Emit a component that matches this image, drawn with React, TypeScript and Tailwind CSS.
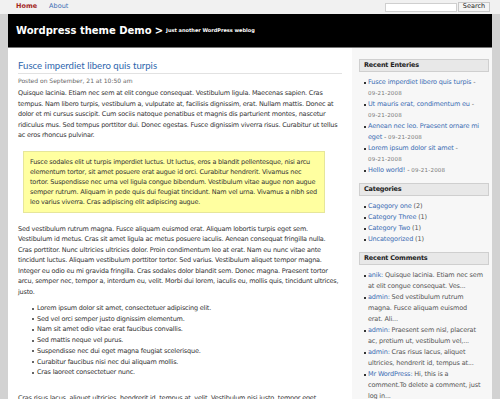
import React from "react";

const body = "font-['DejaVu_Sans',sans-serif]";

const recent: [string[], string][] = [
  [["Fusce imperdiet libero quis turpis"], ""],
  [["Ut mauris erat, condimentum eu"], ""],
  [["Aenean nec leo. Praesent ornare mi", "eget"], "inline"],
  [["Lorem ipsum dolor sit amet"], ""],
  [["Hello world!"], "inline"],
];

const cats = [
  ["Cagegory one", "(2)"],
  ["Category Three", "(1)"],
  ["Category Two", "(1)"],
  ["Uncategorized", "(1)"],
];

const comments: [string, string[]][] = [
  ["anik", ["Quisque lacinia. Etiam nec sem", "at elit congue consequat. Ves..."]],
  ["admin", ["Sed vestibulum rutrum", "magna. Fusce aliquam euismod", "erat. Ali..."]],
  ["admin", ["Praesent sem nisl, placerat", "ac, pretium ut, vestibulum vel,..."]],
  ["admin", ["Cras risus lacus, aliquet", "ultricies, hendrerit id, tempus at..."]],
  ["Mr WordPress", ["Hi, this is a", "comment.To delete a comment, just", "log in..."]],
];

const listItems = [
  "Lorem ipsum dolor sit amet, consectetuer adipiscing elit.",
  "Sed vel orci semper justo dignissim elementum.",
  "Nam sit amet odio vitae erat faucibus convallis.",
  "Sed mattis neque vel purus.",
  "Suspendisse nec dui eget magna feugiat scelerisque.",
  "Curabitur faucibus nisi nec dui aliquam mollis.",
  "Cras laoreet consectetuer nunc.",
];

const para1 = [
  "Quisque lacinia. Etiam nec sem at elit congue consequat. Vestibulum ligula. Maecenas sapien. Cras",
  "tempus. Nam libero turpis, vestibulum a, vulputate at, facilisis dignissim, erat. Nullam mattis. Donec at",
  "dolor et mi cursus suscipit. Cum sociis natoque penatibus et magnis dis parturient montes, nascetur",
  "ridiculus mus. Sed tempus porttitor dui. Donec egestas. Fusce dignissim viverra risus. Curabitur ut tellus",
  "ac eros rhoncus pulvinar.",
];

const quote = [
  "Fusce sodales elit ut turpis imperdiet luctus. Ut luctus, eros a blandit pellentesque, nisi arcu",
  "elementum tortor, sit amet posuere erat augue id orci. Curabitur hendrerit. Vivamus nec",
  "tortor. Suspendisse nec urna vel ligula congue bibendum. Vestibulum vitae augue non augue",
  "semper rutrum. Aliquam in pede quis dui feugiat tincidunt. Nam vel urna. Vivamus a nibh sed",
  "leo varius viverra. Cras adipiscing elit adipiscing augue.",
];

const para2 = [
  "Sed vestibulum rutrum magna. Fusce aliquam euismod erat. Aliquam lobortis turpis eget sem.",
  "Vestibulum id metus. Cras sit amet ligula ac metus posuere iaculis. Aenean consequat fringilla nulla.",
  "Cras porttitor. Nunc ultricies ultricies dolor. Proin condimentum leo at erat. Nam eu nunc vitae ante",
  "tincidunt luctus. Aliquam vestibulum porttitor tortor. Sed varius. Vestibulum aliquet tempor magna.",
  "Integer eu odio eu mi gravida fringilla. Cras sodales dolor blandit sem. Donec magna. Praesent tortor",
  "arcu, semper nec, tempor a, interdum eu, velit. Morbi dui lorem, iaculis eu, mollis quis, tincidunt ultrices,",
  "justo.",
];

function Lines({ lines }: { lines: string[] }) {
  return (
    <>
      {lines.map((l, i) => (
        <React.Fragment key={i}>
          {l}
          {i < lines.length - 1 && <br />}
        </React.Fragment>
      ))}
    </>
  );
}

function Heading({ children }: { children: React.ReactNode }) {
  return (
    <div className="h-[13px] bg-[#e8e8e8] border border-[#cfcfcf] flex items-center pl-[4px] text-[6.5px] tracking-[-0.2px] font-bold text-[#222]">
      {children}
    </div>
  );
}

function Bullet() {
  return <span className="absolute left-[-4px] top-[4.5px] w-[2px] h-[2px] bg-[#333]" />;
}

function DateText() {
  return <span className="text-[5.5px] tracking-[0.2px] text-[#777]">09-21-2008</span>;
}

export default function App() {
  return (
    <div className={`w-[500px] h-[399px] overflow-hidden bg-[#d2d2d2] flex flex-col ${body}`}>
      <nav className="h-[14px] shrink-0 bg-[#f1f1f1] flex items-center pl-[16px] pr-[10px] text-[6.5px]">
        <span className="font-bold text-[#a3271c]">Home</span>
        <span className="ml-[12px] text-[#3a6cb3]">About</span>
        <div className="ml-auto flex items-center gap-[1px]">
          <div className="w-[72px] h-[9px] bg-white border border-[#cfcfcf]" />
          <div className="w-[32px] h-[10px] bg-[#f4f4f4] border border-[#c8c8c8] flex items-center justify-center text-[6.5px] text-[#222]">
            Search
          </div>
        </div>
      </nav>
      <div className="mx-[8px] flex-1 bg-white flex flex-col min-h-0">
        <header className="h-[34px] shrink-0 bg-black border-b border-[#777] flex items-center pl-[8px] text-white">
          <span className="text-[10px] font-bold leading-none">Wordpress theme Demo</span>
          <span className="ml-[3px] text-[10px] font-bold leading-none">&gt;</span>
          <span className="ml-[3px] text-[5px] font-bold leading-none">Just another WordPress weblog</span>
        </header>
        <div className="flex flex-1 min-h-0">
          <main className="w-[344px] shrink-0 pl-[10px] pt-[11px] text-[6.5px] tracking-[-0.2px] text-[#333]">
            <h1 className="mr-[10px] text-[9.6px] tracking-normal leading-[13px] text-[#2f67ad] font-['Lato',sans-serif] border-b border-[#e2e2e2] pb-[1px]">
              Fusce imperdiet libero quis turpis
            </h1>
            <div className="mt-[2px] text-[6px] tracking-normal leading-[9px] text-[#666]">Posted on September, 21 at 10:50 am</div>
            <p className="mt-[3px] leading-[10.5px] whitespace-nowrap">
              <Lines lines={para1} />
            </p>
            <div className="mt-[10px] ml-[5px] w-[302px] bg-[#ffffa0] border border-[#e6e69a] px-[6px] py-[5px] leading-[10px] whitespace-nowrap">
              <Lines lines={quote} />
            </div>
            <p className="mt-[11px] leading-[10.5px] whitespace-nowrap">
              <Lines lines={para2} />
            </p>
            <ul className="mt-[6px] pl-[19px] leading-[10.7px]">
              {listItems.map((t) => (
                <li key={t} className="relative">
                  <span className="absolute left-[-5px] top-[4.5px] w-[2px] h-[2px] rounded-full bg-[#333]" />
                  {t}
                </li>
              ))}
            </ul>
            <p className="mt-[15px] leading-[10.5px] whitespace-nowrap">
              Cras risus lacus, aliquet ultricies, hendrerit id, tempus at, velit. Vestibulum nisi justo, tempor eget,
              <br />
              pretium vel, ultricies ac, nibh.
            </p>
          </main>
          <aside className="flex-1 bg-[#f7f7f7] pl-[7px] pr-[3px] pt-[11px] text-[6.5px] tracking-[-0.15px] leading-[11px] whitespace-nowrap">
            <Heading>Recent Enteries</Heading>
            <ul className="mt-[5px] pl-[9px]">
              {recent.map(([lines, mode], i) => (
                <li key={i} className="relative">
                  <Bullet />
                  <span className="text-[#3a6cb3]">
                    <Lines lines={lines} />
                  </span>
                  <span className="text-[#666]"> - </span>
                  {mode === "" && <br />}
                  <DateText />
                </li>
              ))}
            </ul>
            <div className="mt-[7px]">
              <Heading>Categories</Heading>
            </div>
            <ul className="mt-[5px] pl-[9px]">
              {cats.map(([t, n]) => (
                <li key={t} className="relative">
                  <Bullet />
                  <span className="text-[#3a6cb3]">{t}</span>
                  <span className="text-[#555]"> {n}</span>
                </li>
              ))}
            </ul>
            <div className="mt-[7px]">
              <Heading>Recent Comments</Heading>
            </div>
            <ul className="mt-[5px] pl-[9px]">
              {comments.map(([a, t], i) => (
                <li key={i} className="relative">
                  <Bullet />
                  <span className="text-[#3a6cb3]">{a}:</span>
                  <span className="text-[#555]">
                    {" "}
                    <Lines lines={t} />
                  </span>
                </li>
              ))}
            </ul>
          </aside>
        </div>
      </div>
    </div>
  );
}
